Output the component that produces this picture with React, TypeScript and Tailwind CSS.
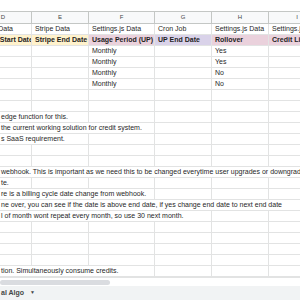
import React from "react";

const widths = [57, 57, 66, 57, 57, 57];
const letters = ["D", "E", "F", "G", "H", "I"];

type Cell = { t?: string; bold?: boolean; bg?: string };

const rowA: Cell[] = [
  { t: "Stripe Data" },
  { t: "Stripe Data" },
  { t: "Settings.js Data" },
  { t: "Cron Job" },
  { t: "Settings.js Data" },
  { t: "Settings.js Data" },
];
const rowB: Cell[] = [
  { t: "Stripe Start Date", bold: true, bg: "bg-[#fff2cc]" },
  { t: "Stripe End Date", bold: true, bg: "bg-[#fff2cc]" },
  { t: "Usage Period (UP)", bold: true, bg: "bg-[#ead1dc]" },
  { t: "UP End Date", bold: true, bg: "bg-[#d9d2e9]" },
  { t: "Rollover", bold: true, bg: "bg-[#ead1dc]" },
  { t: "Credit Limit", bold: true, bg: "bg-[#ead1dc]" },
];

function monthly(v: string): Cell[] {
  return [{}, {}, { t: "Monthly" }, {}, { t: v }, {}];
}

const overflow: Record<number, string> = {
  8: "edge function for this.",
  9: "the current working solution for credit system.",
  10: "s SaaS requirement.",
  13: "webhook. This is important as we need this to be changed everytime user upgrades or downgrades",
  14: "te.",
  15: "re is a billing cycle date change from webhook.",
  16: "ne over, you can see if the date is above end date, if yes change end date to next end date",
  17: "l of month wont repeat every month, so use 30 next month.",
  22: "tion. Simultaneously consume credits.",
};

function GridRow({ cells }: { cells: Cell[] }) {
  return (
    <div className="flex h-[11px] ml-[-25px] shrink-0">
      {widths.map((w, i) => {
        const c = cells[i] || {};
        return (
          <div
            key={i}
            style={{ width: w }}
            className={`shrink-0 h-[11px] border-r border-b border-[#e2e3e3] px-[3px] leading-[10px] whitespace-nowrap overflow-hidden ${c.bg || ""} ${c.bold ? "font-bold" : ""}`}
          >
            {c.t}
          </div>
        );
      })}
    </div>
  );
}

export default function App() {
  const rows: React.ReactNode[] = [];
  rows.push(<GridRow key="a" cells={rowA} />);
  rows.push(<GridRow key="b" cells={rowB} />);
  ["Yes", "Yes", "No", "No"].forEach((v, i) => rows.push(<GridRow key={"m" + i} cells={monthly(v)} />));
  for (let k = 6; k <= 22; k++) {
    const text = overflow[k];
    rows.push(
      <div key={"r" + k} className="relative h-[11px] shrink-0">
        <GridRow cells={[]} />
        {text && (
          <div className="absolute left-0 top-0 h-[10px] bg-white pl-[1px] pr-[2px] leading-[10px] whitespace-nowrap text-[#1f1f1f]">
            {text}
          </div>
        )}
      </div>
    );
  }
  return (
    <div className="w-[300px] h-[300px] overflow-hidden bg-white flex flex-col font-['Liberation_Sans',Arial,sans-serif] text-[7px] text-[#1f1f1f]">
      <div className="h-[12px] shrink-0 bg-white border-b border-[#c4c7c5]" />
      <div className="flex h-[12px] ml-[-25px] shrink-0 bg-[#f8f9fa]">
        {widths.map((w, i) => (
          <div
            key={i}
            style={{ width: w }}
            className="shrink-0 h-[12px] border-r border-b border-[#c4c7c5] text-center leading-[11px] text-[6px] text-[#444746]"
          >
            {letters[i]}
          </div>
        ))}
      </div>
      {rows}
      <div className="h-[9px] shrink-0 bg-white border-t border-[#e2e3e3] flex items-center">
        <div className="h-[5px] w-[110px] rounded-full bg-[#dadce0]" />
      </div>
      <div className="flex-1 bg-[#f1f3f4] flex items-center">
        <div className="flex items-center gap-[6px] pl-[1px] text-[7px] font-bold text-[#444746]">
          <span>al Algo</span>
          <span className="text-[5px]">▼</span>
        </div>
      </div>
    </div>
  );
}
